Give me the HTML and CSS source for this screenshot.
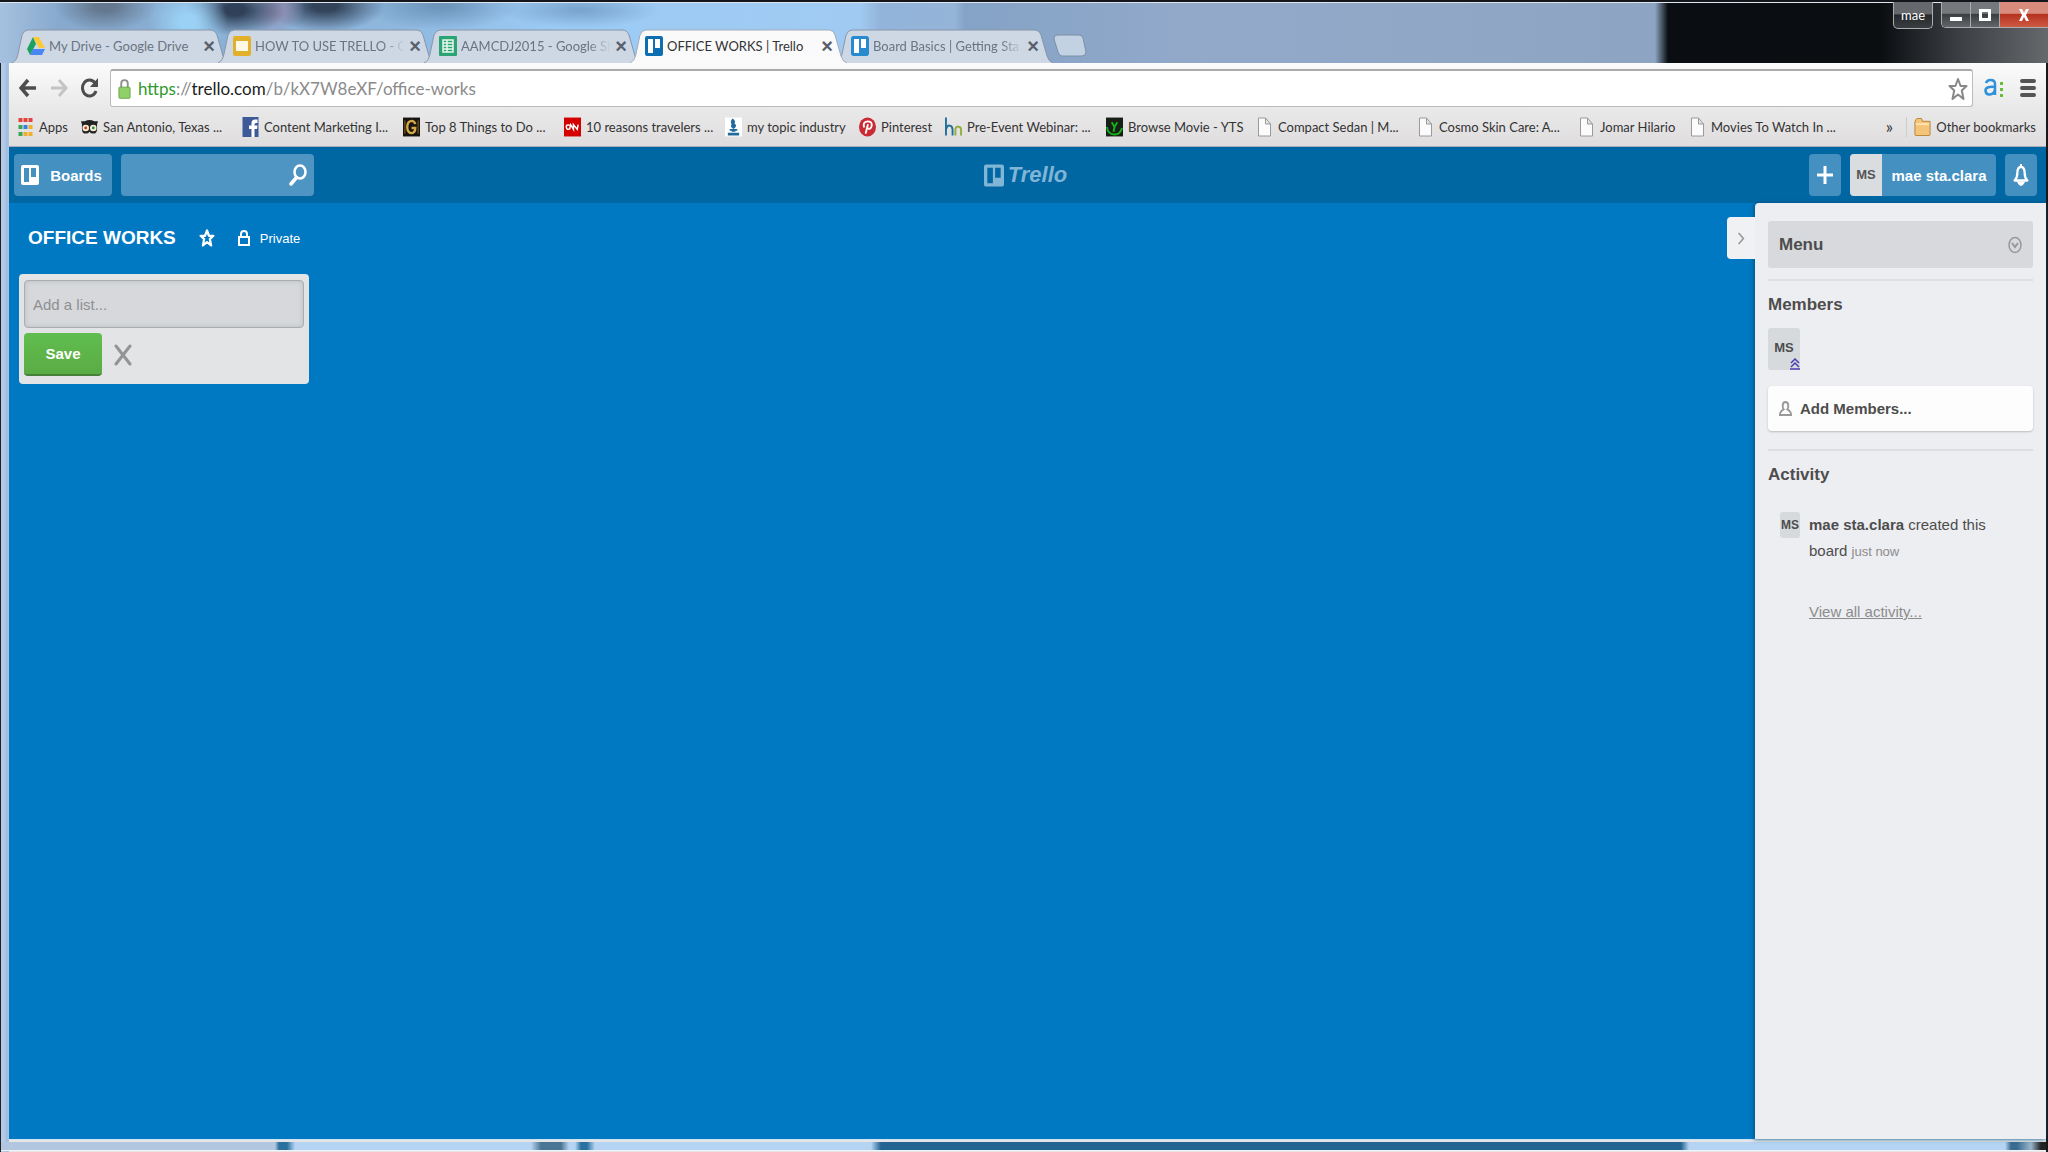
FILE: index.html
```html
<!DOCTYPE html>
<html lang="en">
<head>
<meta charset="utf-8">
<title>OFFICE WORKS | Trello</title>
<link rel="stylesheet" href="styles.css">
</head>
<body>
<svg class="defs" width="0" height="0" aria-hidden="true">
  <symbol id="tab-shape" viewBox="0 0 217 34" preserveAspectRatio="none">
    <path d="M0 34 C4 32 5 29 6 25 L10 6 Q12 1 16 1 H198 Q203 1 205 6 L211 27 Q213 33 217 34"/>
  </symbol>
  <symbol id="board" viewBox="0 0 18 20">
    <path fill-rule="evenodd" d="M2 0H16Q18 0 18 2V18Q18 20 16 20H2Q0 20 0 18V2Q0 0 2 0ZM3 3V17H8V3ZM10 3V12H15V3Z"/>
  </symbol>
  <symbol id="page" viewBox="0 0 14 20">
    <path d="M1 1H8L13 7V19H1ZM8 1V7H13" fill="#fbfbfb" stroke="#9a9a9a"/>
  </symbol>
  <symbol id="star" viewBox="0 0 20 24">
    <path d="M10 2L12.600 9H18.500L13.800 13.500L15.500 22L10 17.500L4.500 22L6.200 13.500L1.500 9H7.400Z" fill="none" stroke="currentColor" stroke-linejoin="round"/>
  </symbol>
</svg>

<header class="titlebar">
  <nav class="tabs" aria-label="Tabs">
    <div class="tab">
      <svg class="shape"><use href="#tab-shape"/></svg>
      <svg class="fav" viewBox="0 0 18 20"><path d="M6 1L0 13L3 19L9 8Z" fill="#1ba160"/><path d="M6 1H12L18 12H12Z" fill="#fdc938"/><path d="M6 13H18L15 19H3Z" fill="#4687f4"/></svg>
      <span class="tab-title">My Drive - Google Drive</span><button class="close" aria-label="Close tab">×</button>
    </div>
    <div class="tab">
      <svg class="shape"><use href="#tab-shape"/></svg>
      <svg class="fav" viewBox="0 0 18 20"><rect width="18" height="20" rx="2" fill="#e2b02a"/><rect x="3" y="5" width="12" height="10" fill="#fff8e4"/></svg>
      <span class="tab-title fade">HOW TO USE TRELLO - Go</span><button class="close" aria-label="Close tab">×</button>
    </div>
    <div class="tab">
      <svg class="shape"><use href="#tab-shape"/></svg>
      <svg class="fav" viewBox="0 0 18 20"><rect width="18" height="20" rx="1" fill="#2ba473"/><path d="M4 4H14V16H4ZM4 7H14M4 10H14M4 13H14M8 4V16" fill="none" stroke="#e8f7f0" stroke-width="1.500"/></svg>
      <span class="tab-title fade">AAMCDJ2015 - Google Sh</span><button class="close" aria-label="Close tab">×</button>
    </div>
    <div class="tab active">
      <svg class="shape"><use href="#tab-shape"/></svg>
      <svg class="fav trello-fav"><use href="#board"/></svg>
      <span class="tab-title">OFFICE WORKS | Trello</span><button class="close" aria-label="Close tab">×</button>
    </div>
    <div class="tab">
      <svg class="shape"><use href="#tab-shape"/></svg>
      <svg class="fav trello-fav soft"><use href="#board"/></svg>
      <span class="tab-title fade">Board Basics | Getting Sta</span><button class="close" aria-label="Close tab">×</button>
    </div>
    <button class="new-tab" aria-label="New tab"><svg viewBox="0 0 34 23"><path d="M4 1H26Q29 1 30 4L33 18Q33 22 29 22H9Q6 22 5 18L1 5Q1 1 4 1Z" fill="#c3d2e3" stroke="#7d8ea8"/></svg></button>
  </nav>
  <div class="window-controls">
    <button class="profile">mae</button>
    <div class="control-group">
      <button aria-label="Minimize"><svg viewBox="0 0 14 16"><rect x="1" y="10" width="12" height="4" fill="#fff"/></svg></button>
      <button aria-label="Maximize"><svg viewBox="0 0 14 16"><path d="M2.500 3.500H11.500V12.500H2.500Z" fill="none" stroke="#fff" stroke-width="3"/></svg></button>
      <button class="exit" aria-label="Close"><svg viewBox="0 0 14 16"><path d="M2 2H5L7 6L9 2H12L9 8L12 14H9L7 10L5 14H2L5 8Z" fill="#fff"/></svg></button>
    </div>
  </div>
</header>

<div class="window">
  <div class="toolbar">
    <button class="nav-btn" aria-label="Back"><svg viewBox="0 0 18 20"><path d="M9 2L2 10L9 18M2 10H17" fill="none" stroke="#4d4d4d" stroke-width="3.500"/></svg></button>
    <button class="nav-btn" aria-label="Forward"><svg viewBox="0 0 18 20"><path d="M9 2L16 10L9 18M16 10H1" fill="none" stroke="#c4c4c4" stroke-width="3"/></svg></button>
    <button class="nav-btn" aria-label="Reload"><svg viewBox="0 0 18 20"><path d="M14 5A7 8 0 1 0 15 13" fill="none" stroke="#4d4d4d" stroke-width="3"/><path d="M17 0V9H9Z" fill="#4d4d4d"/></svg></button>
    <div class="omnibox">
      <svg class="lock" viewBox="0 0 14 22"><path d="M3.500 10V5Q3.500 1.500 7 1.500T10.500 5V10" fill="none" stroke="#8d8d8d" stroke-width="2"/><rect x="1" y="9" width="12" height="12" rx="1" fill="#8fd068" stroke="#69a548"/></svg>
      <div class="url" role="textbox" aria-label="Address" contenteditable="true" spellcheck="false"><span class="secure">https</span>://<span class="host">trello.com</span>/b/kX7W8eXF/office-works</div>
      <svg class="bookmark-star"><use href="#star"/></svg>
    </div>
    <button class="ext" aria-label="Extension"><svg viewBox="0 0 20 20"><path d="M2 5Q3 2 6.500 2Q11 2 11 6V17M11 9Q1 8 1.500 13Q2 17 6 16.500Q11 16 11 10" fill="none" stroke="#2f93dc" stroke-width="2.500"/><path d="M16 4H19V7H16ZM16 10H19V13H16ZM16 16H19V19H16Z" fill="#65bd3c"/></svg></button>
    <button class="ext" aria-label="Chrome menu"><svg viewBox="0 0 16 20"><path d="M2 3H14M2 10H14M2 17H14" stroke="#555" stroke-width="4" stroke-linecap="round"/></svg></button>
  </div>

  <nav class="bookmarks" aria-label="Bookmarks">
    <a href="#" class="bm apps"><svg viewBox="0 0 16 20"><path d="M1 1H5V5H1ZM6 1H10V5H6ZM11 1H15V5H11Z" fill="#e0443c"/><path d="M1 8H5V12H1Z" fill="#3aa757"/><path d="M6 8H10V12H6Z" fill="#3b7de0"/><path d="M11 8H15V12H11ZM6 15H10V19H6ZM11 15H15V19H11Z" fill="#f0b02d"/><path d="M1 15H5V19H1Z" fill="#3aa757"/></svg><span>Apps</span></a>
    <a href="#" class="bm"><svg viewBox="0 0 18 20"><path d="M0 4H4Q9 1 14 4H18L17 7V12Q17 17 13 17Q10 17 9 15Q8 17 5 17Q1 17 1 12V7Z" fill="#222"/><circle cx="5" cy="11" r="3.500" fill="#f3eed0"/><circle cx="13" cy="11" r="3.500" fill="#f3eed0"/><circle cx="5" cy="11" r="1.500" fill="#c33"/><circle cx="13" cy="11" r="1.500" fill="#385"/></svg><span>San Antonio, Texas ...</span></a>
    <a href="#" class="bm"><svg viewBox="0 0 16 20"><rect width="16" height="20" fill="#3c5a98"/><path d="M9 20V12H6.500V8.500H9V6Q9 2.500 12.500 2.500H15V6H13.500Q12 6 12 7.500V8.500H15L14.500 12H12V20Z" fill="#fff"/></svg><span>Content Marketing I...</span></a>
    <a href="#" class="bm"><svg viewBox="0 0 18 20"><rect width="18" height="20" fill="#17130d"/><path d="M13 7Q12 3.500 9 3.500Q4.500 4 4.500 10T9 16.500Q13 16 13 11H9" fill="none" stroke="#d3a84b" stroke-width="2.500"/><path d="M2 3V17M16 3V17" stroke="#8d6a26"/></svg><span>Top 8 Things to Do ...</span></a>
    <a href="#" class="bm"><svg viewBox="0 0 18 20"><rect width="18" height="20" fill="#d40000"/><path d="M6 8Q2 7 2.500 10.500Q3 13.500 6 12L7 7.500L10 12.500V7.500L14 12.500L15 7.500" fill="none" stroke="#fff" stroke-width="1.600"/></svg><span>10 reasons travelers ...</span></a>
    <a href="#" class="bm topic"><svg viewBox="0 0 18 20"><rect width="18" height="20" fill="#fff"/><path d="M8 1Q12 4 10 6Q14 9 9 12Q5 10 7 7Q5 4 8 1ZM5 12H13V14H11V15H7V14H5ZM3 16H15V19H3Z" fill="#216a9b"/></svg><span>my topic industry</span></a>
    <a href="#" class="bm pin"><svg viewBox="0 0 18 20"><ellipse cx="9" cy="10" rx="9" ry="10" fill="#ca2b35"/><path d="M5.500 10.500Q3.500 4.500 9 4Q14 4 13.500 8.500Q12.500 13 9 11.500M9.500 7L7 17" fill="none" stroke="#fff" stroke-width="2"/></svg><span>Pinterest</span></a>
    <a href="#" class="bm"><svg viewBox="0 0 18 20"><path d="M1 0V19M1 13Q2 8 5 8.500Q8 9 8 13V19" fill="none" stroke="#21709a" stroke-width="2"/><path d="M11 19V12Q12 9 14 9.500Q17 10 17 13V19" fill="none" stroke="#93ad3b" stroke-width="2"/></svg><span>Pre-Event Webinar: ...</span></a>
    <a href="#" class="bm browse"><svg viewBox="0 0 18 20"><rect width="18" height="20" fill="#182016"/><path d="M6 5L9 10L12 5M9 10L8 15M1 10Q2 18 9 18Q15 18 17 11" fill="none" stroke="#14b319" stroke-width="2"/></svg><span>Browse Movie - YTS</span></a>
    <a href="#" class="bm"><svg><use href="#page"/></svg><span>Compact Sedan | M...</span></a>
    <a href="#" class="bm"><svg><use href="#page"/></svg><span>Cosmo Skin Care: A...</span></a>
    <a href="#" class="bm jomar"><svg><use href="#page"/></svg><span>Jomar Hilario</span></a>
    <a href="#" class="bm"><svg><use href="#page"/></svg><span>Movies To Watch In ...</span></a>
    <button class="more" aria-label="More bookmarks">»</button>
    <a href="#" class="bm other"><svg viewBox="0 0 18 20"><path d="M1 4L3 1H8L9 4H17V18Q17 19 16 19H2Q1 19 1 18Z" fill="#f4c578" stroke="#b98338"/><path d="M2 7H16" stroke="#fde3b0" stroke-width="2"/></svg><span>Other bookmarks</span></a>
  </nav>

  <div class="app">
    <header class="app-header">
      <div class="left">
        <button class="hbtn boards"><svg><use href="#board"/></svg>Boards</button>
        <label class="search"><input type="search" aria-label="Search"><svg viewBox="0 0 18 22"><ellipse cx="11" cy="8" rx="5.500" ry="6.500" fill="none" stroke="#fff" stroke-width="2.500"/><path d="M7.500 13.500L2 20" stroke="#fff" stroke-width="3.500" stroke-linecap="round"/></svg></label>
      </div>
      <a href="#" class="logo"><svg><use href="#board"/></svg><span>Trello</span></a>
      <div class="right">
        <button class="hbtn square" aria-label="Create"><svg viewBox="0 0 18 22"><path d="M9 2V20M1 11H17" stroke="#fff" stroke-width="3"/></svg></button>
        <button class="hbtn user"><span class="initials">MS</span><span class="name">mae sta.clara</span></button>
        <button class="hbtn square" aria-label="Notifications"><svg viewBox="0 0 18 24"><path d="M9 3Q13 3.500 13 10Q13 15 16 18H2Q5 15 5 10Q5 3.500 9 3Z" fill="none" stroke="#fff" stroke-width="2.500" stroke-linejoin="round"/><path d="M9 0V3M6 20Q9 26 12 20Z" stroke="#fff" fill="#fff" stroke-width="2"/></svg></button>
      </div>
    </header>

    <div class="content">
      <main class="board-area">
        <div class="board-head">
          <h1>OFFICE WORKS</h1>
          <button class="plain star" aria-label="Star board"><svg><use href="#star"/></svg></button>
          <button class="plain private"><svg viewBox="0 0 14 18"><path d="M2 8H12V16H2ZM4 8V5Q4 2 7 2T10 5V8" fill="none" stroke="#fff" stroke-width="2"/></svg>Private</button>
        </div>
        <form class="list-card">
          <input type="text" placeholder="Add a list..." aria-label="Add a list">
          <div class="actions">
            <button type="button" class="save">Save</button>
            <button type="button" class="plain cancel" aria-label="Cancel"><svg viewBox="0 0 18 22"><path d="M2 2L16 20M16 2L2 20" stroke="#929496" stroke-width="3" stroke-linecap="round"/></svg></button>
          </div>
        </form>
      </main>

      <aside class="sidebar">
        <button class="toggle" aria-label="Hide menu"><svg viewBox="0 0 10 16"><path d="M2 1L8 8L2 15" fill="none" stroke="#999" stroke-width="2"/></svg></button>
        <button class="menu-title">Menu<svg viewBox="0 0 14 18"><ellipse cx="7" cy="9" rx="6" ry="7.500" fill="none" stroke="#999" stroke-width="1.500"/><path d="M4 7L7 11L10 7" fill="none" stroke="#999" stroke-width="2"/></svg></button>
        <section class="members">
          <h2>Members</h2>
          <div class="avatar">MS<svg viewBox="0 0 10 12"><path d="M1 5L5 1L9 5M1 9L5 5L9 9M0 11H10" fill="none" stroke="#4a3fb0" stroke-width="1.500"/></svg></div>
          <button class="add-members"><svg viewBox="0 0 14 18"><path d="M7 2Q10 2 10 6Q10 9 9 10Q13 12 13 16H1Q1 12 5 10Q4 9 4 6Q4 2 7 2Z" fill="none" stroke="#999" stroke-width="2"/></svg>Add Members...</button>
        </section>
        <section class="activity">
          <h2>Activity</h2>
          <div class="entry"><span class="avatar mini">MS</span><p><b>mae sta.clara</b> created this<br>board <small>just now</small></p></div>
          <a href="#" class="view-all">View all activity...</a>
        </section>
      </aside>
    </div>
  </div>
</div>
</body>
</html>
```
FILE: styles.css
```css
* { box-sizing: border-box; }
body {
  margin: 0;
  min-height: 100vh;
  display: flex;
  flex-direction: column;
  padding: 0 2px 0 0;
  font-family: "Liberation Sans", Arial, sans-serif;
  font-size: 15px;
  color: #4d4d4d;
  background: linear-gradient(90deg, #222 0 1px, #b4cbe8 1px 4px, #9fbce0 7px, #a9c4e4 9px, #86a9cf 2040px, #17181b 2046px);
}
button, input { font: inherit; color: inherit; border: 0; margin: 0; padding: 0; background: none; }
button { cursor: pointer; display: flex; align-items: center; justify-content: center; white-space: nowrap; }
a { color: inherit; text-decoration: none; }
h1, h2, p { margin: 0; }
svg { flex: none; display: block; }
.defs { position: absolute; }

/* window title bar */
.titlebar {
  height: 63px;
  flex: none;
  display: flex;
  justify-content: space-between;
  align-items: flex-start;
  margin-right: -2px;
  padding: 0 0 0 12px;
  font-family: Lato, sans-serif;
  border-top: 2px solid #14161b;
  box-shadow: inset 0 1px #dfe6ee;
  background:
    radial-gradient(ellipse 50px 26px at 105px 4px, #64788f 20%, transparent),
    radial-gradient(ellipse 40px 36px at 188px 20px, #9ad1f5 20%, transparent),
    radial-gradient(ellipse 50px 26px at 235px 8px, #2f4058 20%, transparent),
    radial-gradient(ellipse 30px 24px at 275px 8px, #8f90b5 20%, transparent),
    radial-gradient(ellipse 60px 26px at 325px 4px, #32435a 20%, transparent),
    radial-gradient(ellipse 80px 24px at 440px 4px, #6e96bd 10%, transparent),
    radial-gradient(ellipse 80px 18px at 580px 8px, #7ba6cf 10%, transparent),
    linear-gradient(90deg, #a6c1df 0, #86a9cd 60px, #8fb8df 400px, #9bcbf5 560px, #a0caf2 860px, #93b4da 880px, #94b4d8 955px, #84a3c6 965px, #93a9ca 1200px, #8da5c2 1655px, #0a0e12 1668px, #0a0e11 1880px, #3c3f43 1960px, #66696c 2048px);
}
.tabs { display: flex; padding-top: 27px; }
.tab {
  position: relative;
  width: 217px;
  height: 34px;
  margin-right: -11px;
  padding: 0 14px 0 15px;
  display: flex;
  align-items: center;
  gap: 4px;
  font-size: 13px;
  color: #697482;
}
.shape { position: absolute; inset: 0; width: 100%; height: 100%; fill: #ced8e4; stroke: #8796aa; }
.active { z-index: 1; color: #333; }
.active .shape { fill: #fafafb; stroke: #a2acb9; }
.tab > :not(.shape) { position: relative; }
.fav { width: 18px; height: 20px; }
.trello-fav { fill: #0d6fb2; background: #fff; }
.soft { fill: #2a8ace; }
.tab-title { flex: 1; min-width: 0; white-space: nowrap; }
.fade {
  -webkit-mask-image: linear-gradient(90deg, #000 85%, transparent);
  mask-image: linear-gradient(90deg, #000 85%, transparent);
}
.close { width: 12px; flex: none; font: bold 20px "Liberation Sans", Arial, sans-serif; color: #59616c; }
.new-tab { margin: 5px 0 0 11px; height: 23px; }
.new-tab svg { width: 34px; height: 23px; }
.window-controls { display: flex; gap: 8px; color: #fff; font-size: 13px; }
.profile, .control-group { border: 1px solid #a9adb0; border-top: 0; border-radius: 0 0 5px 5px; overflow: hidden; }
.profile { width: 40px; height: 27px; background: linear-gradient(#65696d 45%, #26292c 50%, #3b3e41); }
.control-group { display: flex; height: 26px; border-right: 0; border-bottom-right-radius: 0; }
.control-group button { width: 29px; border-right: 1px solid #a9adb0; background: linear-gradient(#75797c 45%, #3b3e41 50%, #64676a); }
.control-group svg { width: 14px; height: 16px; }
.control-group .exit { width: 48px; border: 0; background: linear-gradient(#d98c7c 45%, #b5321e 50%, #cf5a43); }

/* browser chrome */
.window { flex: 1; display: flex; flex-direction: column; margin: 0 0 0 9px; background: #e6e4e5; }
.toolbar { height: 48px; flex: none; display: flex; align-items: center; padding: 2px 10px 0 3px; background: linear-gradient(#fbfbfc, #e9e8e9); }
.nav-btn { width: 31px; height: 36px; }
.nav-btn svg { width: 18px; height: 20px; }
.omnibox { flex: 1; height: 38px; margin: 0 11px 0 5px; padding: 0 4px 0 7px; display: flex; align-items: center; gap: 7px; border: 1px solid #bbb; border-top: 2px solid #aaa; border-radius: 3px; background: #fff; }
.lock { width: 13px; height: 22px; }
.url { flex: 1; font-family: Lato, sans-serif; font-size: 17px; color: #8b8b8b; outline: 0; }
.secure { color: #2f9a2f; }
.host { color: #222; }
.bookmark-star { width: 20px; height: 24px; color: #888; stroke-width: 2; }
.ext { width: 20px; margin-right: 16px; }
.ext:last-child { width: 16px; margin-right: 0; }
.ext svg { width: 20px; height: 20px; }
.bookmarks { height: 36px; flex: none; display: flex; align-items: center; padding: 0 10px 4px 8px; font-family: Lato, sans-serif; font-size: 13px; color: #333; background: linear-gradient(#e9e8e9, #dfddde); border-bottom: 1px solid #aab; }
.bm { width: 161px; flex: none; display: flex; align-items: center; gap: 5px; white-space: nowrap; }
.bm svg { width: 17px; height: 20px; }
.apps { width: 64px; }
.topic { width: 134px; }
.pin { width: 86px; }
.browse { width: 150px; }
.jomar { width: 111px; }
.more { margin-left: auto; width: 34px; font-size: 17px; }
.other { width: auto; padding-left: 7px; border-left: 1px solid #ccc; }

/* trello */
.app { flex: 1; display: flex; flex-direction: column; background: #0079c2; border-bottom: 1px solid #cde4f5; margin-bottom: 2px; }
.window::after {
  content: "";
  height: 8px;
  margin: 0 0 1px -8px;
  border-bottom: 1px solid #eef4fa;
  background: linear-gradient(90deg, #b2c6df 240px, #b2c6df 274px, #2a719f 278px 286px, #b5d4f3 294px 530px, #4b7595 540px 560px, #b5d4f3 568px 574px, #2a719f 580px 586px, #b5d4f3 594px 870px, #246492 880px 1680px, #b5d4f3 1688px 2004px, #3a6c91 2010px 2016px, #9ab4cc 2030px, #222 2040px);
}
.app-header { height: 56px; flex: none; display: grid; grid-template-columns: 1fr auto 1fr; align-items: center; padding: 0 9px 0 5px; background: #0067a3; color: #fff; }
.left, .right { display: flex; gap: 9px; }
.right { justify-content: flex-end; }
.hbtn, .search { height: 42px; border-radius: 4px; background: #4390c1; font-weight: bold; }
.boards { width: 98px; padding-right: 3px; gap: 11px; }
.boards svg { width: 18px; height: 22px; fill: #fff; }
.search { display: flex; align-items: center; width: 193px; padding-right: 7px; background: #4f95c3; }
.search input { flex: 1; min-width: 0; height: 42px; outline: 0; }
.search svg { width: 18px; height: 22px; }
.square { width: 32px; }
.square svg { width: 18px; height: 22px; }
.user { overflow: hidden; width: 146px; }
.initials { width: 32px; line-height: 42px; background: #dadde0; color: #555; font-size: 13px; }
.name { flex: 1; }
.logo { display: flex; align-items: center; gap: 4px; color: #80b5d6; font-size: 22px; font-style: italic; font-weight: bold; }
.logo svg { width: 20px; height: 25px; fill: #80b5d6; }
.content { flex: 1; display: flex; }
.board-area { flex: 1; padding: 15px 10px; color: #fff; }
.board-head { height: 40px; display: flex; align-items: center; padding-left: 9px; }
h1 { font-size: 19px; }
.plain { font-size: 13px; gap: 9px; }
.star { margin: 0 22px 0 23px; }
.star svg { width: 16px; height: 18px; stroke-width: 3; }
.private svg { width: 14px; height: 18px; }
.list-card { width: 290px; height: 110px; margin-top: 16px; padding: 6px 5px; border-radius: 4px; background: #e2e4e6; }
.list-card input { width: 100%; height: 48px; padding: 0 8px; border: 1px solid #a9adb0; border-radius: 4px; background: #d6d8db; box-shadow: inset 0 0 5px #bbbec2; color: #333; font-size: 15px; }
.list-card input::placeholder { color: #8e9092; opacity: 1; }
.actions { display: flex; margin-top: 5px; gap: 12px; }
.save { width: 78px; height: 43px; border-radius: 4px; border-bottom: 2px solid #47803a; background: linear-gradient(#61bd4f, #5aac44); color: #fff; font-weight: bold; }
.cancel svg { width: 18px; height: 22px; }

.sidebar { position: relative; width: 291px; padding: 18px 13px; border-top-left-radius: 4px; background: #edeef2; box-shadow: -1px 0 4px #00507f; }
.toggle { position: absolute; right: 100%; top: 14px; width: 28px; height: 42px; border-radius: 4px 0 0 4px; background: #f0f1f3; }
.toggle svg { width: 8px; height: 15px; }
.menu-title { width: 100%; height: 47px; padding: 0 11px; justify-content: space-between; border-radius: 3px; background: #d7d9dd; font-weight: bold; font-size: 17px; }
.menu-title svg { width: 14px; height: 18px; }
h2 { font-size: 17px; line-height: 26px; }
section { border-top: 2px solid #dcdee0; padding-top: 11px; }
.members { margin-top: 11px; height: 170px; }
.avatar { position: relative; width: 32px; height: 42px; margin-top: 10px; border-radius: 3px; background: #d6dadd; font-size: 13px; font-weight: bold; line-height: 40px; text-align: center; }
.avatar svg { position: absolute; right: 0; bottom: 0; width: 10px; height: 12px; }
.add-members { width: 100%; height: 45px; margin-top: 16px; padding-left: 11px; gap: 8px; justify-content: flex-start; border-radius: 4px; background: #fdfdfd; box-shadow: 0 1px 2px #bbb; font-weight: bold; }
.add-members svg { width: 13px; height: 17px; }
.entry { display: flex; gap: 9px; padding: 24px 0 0 12px; }
.entry p { line-height: 26px; }
.entry small { font-size: 13px; color: #8c8c8c; }
.mini { width: 20px; height: 26px; margin: 0; flex: none; font-size: 12px; line-height: 26px; }
.view-all { display: inline-block; margin: 34px 0 0 41px; font-size: 15px; line-height: 26px; color: #8c8c8c; text-decoration: underline; }
```
